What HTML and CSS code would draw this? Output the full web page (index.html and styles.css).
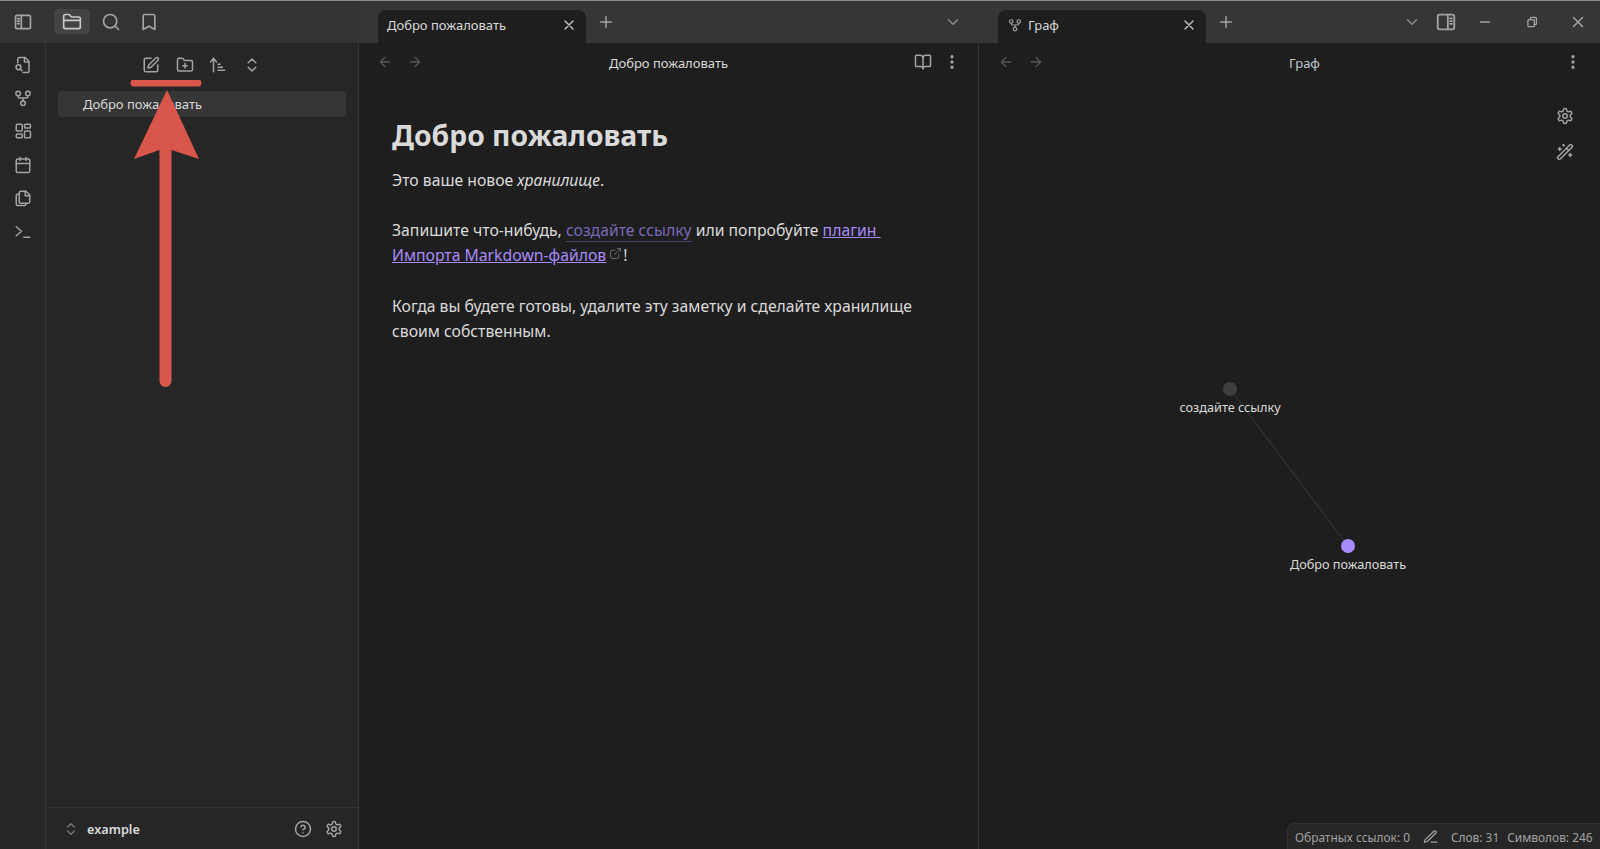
FILE: index.html
```html
<!DOCTYPE html>
<html lang="ru">
<head>
<meta charset="utf-8">
<title>Добро пожаловать</title>
<link rel="stylesheet" href="styles.css">
</head>
<body>
<svg class="defs" width="0" height="0" aria-hidden="true">
  <symbol id="i-sidebar" viewBox="0 0 24 24"><rect x="3" y="4" width="18" height="16" rx="2"/><path d="M10 4v16M5.5 8H7.5M5.5 11H7.5M5.5 14H7.5"/></symbol>
  <symbol id="i-sidebar-r" viewBox="0 0 24 24"><rect x="3" y="4" width="18" height="16" rx="2"/><path d="M14 4v16M16.5 8H18.5M16.5 11H18.5M16.5 14H18.5"/></symbol>
  <symbol id="i-folder" viewBox="0 0 24 24"><path d="M20 20a2 2 0 0 0 2-2V8a2 2 0 0 0-2-2h-7.9a2 2 0 0 1-1.69-.9L9.6 3.9A2 2 0 0 0 7.93 3H4a2 2 0 0 0-2 2v13a2 2 0 0 0 2 2Z"/><path d="M2 10h20"/></symbol>
  <symbol id="i-search" viewBox="0 0 24 24"><circle cx="11" cy="11" r="8"/><path d="m21 21-4.3-4.3"/></symbol>
  <symbol id="i-bookmark" viewBox="0 0 24 24"><path d="m19 21-7-4-7 4V5a2 2 0 0 1 2-2h10a2 2 0 0 1 2 2v16z"/></symbol>
  <symbol id="i-filesearch" viewBox="0 0 24 24"><path d="M5 9V4a2 2 0 0 1 2-2h8l5 5v13a2 2 0 0 1-2 2h-6"/><path d="M14 2v6h6"/><circle cx="6" cy="15" r="3.2"/><path d="m10.5 19.5-2.2-2.2"/></symbol>
  <symbol id="i-fork" viewBox="0 0 24 24"><circle cx="12" cy="19" r="3"/><circle cx="5.5" cy="6" r="3"/><circle cx="18.5" cy="6" r="3"/><path d="M5.5 9v1c0 1.200.8 2 2 2h9c1.200 0 2-.8 2-2V9M12 12v4"/></symbol>
  <symbol id="i-dash" viewBox="0 0 24 24"><rect x="3" y="3" width="8" height="9" rx="1.500"/><rect x="14" y="3" width="8" height="5" rx="1.500"/><rect x="14" y="12" width="8" height="9" rx="1.500"/><rect x="3" y="16" width="8" height="5" rx="1.500"/></symbol>
  <symbol id="i-calendar" viewBox="0 0 24 24"><rect x="3" y="4" width="18" height="18" rx="2"/><path d="M8 2v4M16 2v4M3 10h18"/></symbol>
  <symbol id="i-copy" viewBox="0 0 24 24"><path d="M9 3h7l5 5v9a2 2 0 0 1-2 2H9a2 2 0 0 1-2-2V5a2 2 0 0 1 2-2z"/><path d="M15 3v6h6"/><path d="M7 7H5a2 2 0 0 0-2 2v11a2 2 0 0 0 2 2h9a2 2 0 0 0 2-2v-1"/></symbol>
  <symbol id="i-term" viewBox="0 0 24 24"><path d="m3 17 7-6-7-6M13 19h8"/></symbol>
  <symbol id="i-edit" viewBox="0 0 24 24"><path d="M12 3H5a2 2 0 0 0-2 2v14a2 2 0 0 0 2 2h14a2 2 0 0 0 2-2v-7"/><path d="M18.375 2.625a2.121 2.121 0 1 1 3 3L12 15l-4 1 1-4Z"/></symbol>
  <symbol id="i-folderplus" viewBox="0 0 24 24"><path d="M20 20a2 2 0 0 0 2-2V8a2 2 0 0 0-2-2h-7.900a2 2 0 0 1-1.690-.9L9.600 3.900A2 2 0 0 0 7.930 3H4a2 2 0 0 0-2 2v13a2 2 0 0 0 2 2Z"/><path d="M12 10v6M9 13h6"/></symbol>
  <symbol id="i-sort" viewBox="0 0 24 24"><path d="m2 8 4-5 4 5M6 3v18M12 11h3M12 15h6M12 19h9"/></symbol>
  <symbol id="i-updown" viewBox="0 0 24 24"><path d="m7 15 5 5 5-5M7 9l5-5 5 5"/></symbol>
  <symbol id="i-help" viewBox="0 0 24 24"><circle cx="12" cy="12" r="10"/><path d="M9.090 9a3 3 0 0 1 5.830 1c0 2-3 3-3 3M12 17h.01"/></symbol>
  <symbol id="i-gear" viewBox="0 0 24 24"><path d="M12.220 2h-.44a2 2 0 0 0-2 2v.18a2 2 0 0 1-1 1.730l-.43.25a2 2 0 0 1-2 0l-.15-.08a2 2 0 0 0-2.730.73l-.22.38a2 2 0 0 0 .73 2.730l.15.1a2 2 0 0 1 1 1.720v.51a2 2 0 0 1-1 1.740l-.15.09a2 2 0 0 0-.73 2.730l.22.38a2 2 0 0 0 2.730.73l.15-.08a2 2 0 0 1 2 0l.43.25a2 2 0 0 1 1 1.730V20a2 2 0 0 0 2 2h.44a2 2 0 0 0 2-2v-.18a2 2 0 0 1 1-1.730l.43-.25a2 2 0 0 1 2 0l.15.08a2 2 0 0 0 2.730-.73l.22-.39a2 2 0 0 0-.73-2.730l-.15-.08a2 2 0 0 1-1-1.740v-.5a2 2 0 0 1 1-1.740l.15-.09a2 2 0 0 0 .73-2.730l-.22-.38a2 2 0 0 0-2.730-.73l-.15.08a2 2 0 0 1-2 0l-.43-.25a2 2 0 0 1-1-1.730V4a2 2 0 0 0-2-2z"/><circle cx="12" cy="12" r="3"/></symbol>
  <symbol id="i-wand" viewBox="0 0 24 24"><path d="m21.640 3.640-1.280-1.280a1.210 1.210 0 0 0-1.720 0L2.360 18.640a1.210 1.210 0 0 0 0 1.720l1.280 1.280a1.200 1.200 0 0 0 1.710 0L21.640 5.360a1.200 1.200 0 0 0 0-1.720Z"/><path d="m14 7 3 3M5 6v4M19 14v4M10 2v2M7 8H3M21 16h-4M11 3H9"/></symbol>
  <symbol id="i-book" viewBox="0 0 24 24"><path d="M12 7v14"/><path d="M3 18a1 1 0 0 1-1-1V4a1 1 0 0 1 1-1h5a4 4 0 0 1 4 4 4 4 0 0 1 4-4h5a1 1 0 0 1 1 1v13a1 1 0 0 1-1 1h-6a3 3 0 0 0-3 3 3 3 0 0 0-3-3z"/></symbol>
  <symbol id="i-dots" viewBox="0 0 24 24"><circle cx="12" cy="5" r="1.200"/><circle cx="12" cy="12" r="1.200"/><circle cx="12" cy="19" r="1.200"/></symbol>
  <symbol id="i-back" viewBox="0 0 24 24"><path d="m12 19-7-7 7-7M19 12H5"/></symbol>
  <symbol id="i-fwd" viewBox="0 0 24 24"><path d="M5 12h14M12 5l7 7-7 7"/></symbol>
  <symbol id="i-x" viewBox="0 0 24 24"><path d="M18 6 6 18M6 6l12 12"/></symbol>
  <symbol id="i-plus" viewBox="0 0 24 24"><path d="M5 12h14M12 5v14"/></symbol>
  <symbol id="i-down" viewBox="0 0 24 24"><path d="m6 9 6 6 6-6"/></symbol>
  <symbol id="i-min" viewBox="0 0 24 24"><path d="M5 12h14"/></symbol>
  <symbol id="i-restore" viewBox="0 0 24 24"><rect x="5" y="8" width="11" height="12" rx="1.500"/><path d="M9 8V5.500A1.500 1.500 0 0 1 10.500 4H18a1.500 1.500 0 0 1 1.500 1.500V15A1.500 1.500 0 0 1 18 16.500h-2"/></symbol>
  <symbol id="i-pencil" viewBox="0 0 24 24"><path d="M13 21h9"/><path d="M17.500 3.500a2.120 2.120 0 0 1 3 3L7 20l-5 1.500L3.500 17Z"/></symbol>
  <symbol id="i-ext" viewBox="0 0 24 24"><path d="M18 13v6a2 2 0 0 1-2 2H5a2 2 0 0 1-2-2V8a2 2 0 0 1 2-2h6M15 3h6v6M10 14 21 3"/></symbol>
</svg>

<div class="app">
  <header class="titlebar">
    <div class="tb-left">
      <span class="ic tb-toggle"><svg class="i20"><use href="#i-sidebar"/></svg></span>
      <span class="tb-tab active"><svg class="i20"><use href="#i-folder"/></svg></span>
      <span class="tb-tab"><svg class="i20"><use href="#i-search"/></svg></span>
      <span class="tb-tab"><svg class="i20"><use href="#i-bookmark"/></svg></span>
    </div>
    <div class="tb-pane tb-pane-one">
      <div class="tab tab-one">
        <span class="tab-title">Добро пожаловать</span>
        <svg class="i16 tab-x"><use href="#i-x"/></svg>
      </div>
      <svg class="i18 tab-plus"><use href="#i-plus"/></svg>
      <svg class="i18 tab-more"><use href="#i-down"/></svg>
    </div>
    <div class="tb-pane tb-pane-two">
      <div class="tab tab-two">
        <svg class="i14 tab-icon"><use href="#i-fork"/></svg>
        <span class="tab-title">Граф</span>
        <svg class="i16 tab-x"><use href="#i-x"/></svg>
      </div>
      <svg class="i18 tab-plus"><use href="#i-plus"/></svg>
      <svg class="i18 tab-more tab-more-two"><use href="#i-down"/></svg>
      <svg class="i22 win-layout"><use href="#i-sidebar-r"/></svg>
      <svg class="i16 win-min"><use href="#i-min"/></svg>
      <svg class="i14 win-restore"><use href="#i-restore"/></svg>
      <svg class="i18 win-close"><use href="#i-x"/></svg>
    </div>
  </header>

  <div class="workspace">
    <nav class="ribbon">
      <span class="rib"><svg class="i18"><use href="#i-filesearch"/></svg></span>
      <span class="rib"><svg class="i18"><use href="#i-fork"/></svg></span>
      <span class="rib"><svg class="i18"><use href="#i-dash"/></svg></span>
      <span class="rib"><svg class="i18"><use href="#i-calendar"/></svg></span>
      <span class="rib"><svg class="i18"><use href="#i-copy"/></svg></span>
      <span class="rib"><svg class="i18"><use href="#i-term"/></svg></span>
    </nav>

    <aside class="sidebar">
      <div class="side-nav">
        <svg class="i18"><use href="#i-edit"/></svg>
        <svg class="i18"><use href="#i-folderplus"/></svg>
        <svg class="i18"><use href="#i-sort"/></svg>
        <svg class="i18"><use href="#i-updown"/></svg>
      </div>
      <div class="file-row">Добро пожаловать</div>
      <div class="vault">
        <svg class="i16 vault-switch"><use href="#i-updown"/></svg>
        <span class="vault-name">example</span>
        <svg class="i18 vault-help"><use href="#i-help"/></svg>
        <svg class="i18 vault-gear"><use href="#i-gear"/></svg>
      </div>
    </aside>

    <main class="pane pane-note">
      <div class="view-head">
        <svg class="i16 nav-back"><use href="#i-back"/></svg>
        <svg class="i16 nav-fwd"><use href="#i-fwd"/></svg>
        <span class="view-title">Добро пожаловать</span>
        <svg class="i18 view-book"><use href="#i-book"/></svg>
        <svg class="i18 view-dots"><use href="#i-dots"/></svg>
      </div>
      <article class="note">
        <h1>Добро пожаловать</h1>
        <p>Это ваше новое <em>хранилище</em>.</p>
        <p>Запишите что-нибудь, <span class="link-new">создайте ссылку</span> или попробуйте <span class="link-ext">плагин&nbsp;<wbr>Импорта Markdown-файлов</span><svg class="ext"><use href="#i-ext"/></svg>!</p>
        <p>Когда вы будете готовы, удалите эту заметку и сделайте хранилище своим собственным.</p>
      </article>
    </main>

    <section class="pane pane-graph">
      <div class="view-head">
        <svg class="i16 nav-back"><use href="#i-back"/></svg>
        <svg class="i16 nav-fwd"><use href="#i-fwd"/></svg>
        <span class="view-title view-title-graph">Граф</span>
        <svg class="i18 view-dots"><use href="#i-dots"/></svg>
      </div>
      <div class="graph-tools">
        <svg class="i18"><use href="#i-gear"/></svg>
        <svg class="i18"><use href="#i-wand"/></svg>
      </div>
      <svg class="graph-edge" width="620" height="806"><line x1="251" y1="346" x2="369" y2="503"/></svg>
      <div class="node node-a"><span class="dot"></span><span class="node-label">создайте ссылку</span></div>
      <div class="node node-b"><span class="dot"></span><span class="node-label">Добро пожаловать</span></div>
      <footer class="status">
        <span>Обратных ссылок: 0</span>
        <svg class="i15"><use href="#i-pencil"/></svg>
        <span>Слов: 31</span>
        <span>Символов: 246</span>
      </footer>
    </section>
  </div>

  <svg class="callout" width="120" height="320" viewBox="0 0 120 320">
    <path d="M27 3H91" class="callout-bar"/>
    <path d="M60 10 92 79 64.500 70V301a6 6 0 0 1-12 0V70L27 79Z" class="callout-arrow"/>
  </svg>
</div>
</body>
</html>
```
FILE: styles.css
```css
* { box-sizing: border-box; }
html, body { margin: 0; height: 100%; }
body {
  background: #1e1e1e;
  color: #dadada;
  font-family: "Noto Sans", "Open Sans", sans-serif;
  overflow: hidden;
}
.defs { position: absolute; }
svg { display: block; flex: none; fill: none; stroke: #a3a3a3; stroke-width: 2; stroke-linecap: round; stroke-linejoin: round; }
.i14 { width: 14px; height: 14px; }
.i15 { width: 15px; height: 15px; }
.i16 { width: 16px; height: 16px; }
.i18 { width: 18px; height: 18px; }
.i20 { width: 20px; height: 20px; }
.i22 { width: 22px; height: 22px; }

.app { position: relative; width: 1600px; height: 849px; display: flex; flex-direction: column; }

.titlebar { height: 43px; flex: none; display: flex; background: #363636; border-top: 1px solid #8a8a8a; }
.tb-left { width: 359px; flex: none; display: flex; align-items: center; padding: 0 0 1px 13px; background: #333; }
.ic { display: flex; }
.tb-toggle { margin-right: 21px; }
.tb-tab { width: 36px; height: 25px; margin-right: 2.500px; display: flex; align-items: center; justify-content: center; border-radius: 4px; }
.tb-tab.active { background: #434343; }
.tb-tab.active svg { stroke: #c8c8c8; }
.tb-pane { display: flex; align-items: center; position: relative; }
.tb-pane-one { width: 620px; flex: none; padding-left: 19px; }
.tb-pane-two { flex: 1; padding-left: 19px; }
.tab { align-self: flex-end; height: 33px; padding-bottom: 4px; background: #1e1e1e; border-radius: 8px 8px 0 0; display: flex; align-items: center; font-size: 13px; color: #dadada; padding-left: 9px; padding-right: 9px; }
.tab-one { width: 208px; }
.tab-two { width: 208px; padding-left: 10px; }
.tab-title { flex: 1; line-height: 28px; }
.tab-icon { margin-right: 6px; }
.tab-plus { margin-left: 11px; }
.tab-more { margin-left: auto; margin-right: 17px; stroke: #8a8a8a; }
.tab-more-two { margin-left: 168px; margin-right: 14px; }
.win-layout { margin-right: 20px; }
.win-min { margin-right: 32px; }
.win-restore { margin-right: 30px; stroke-width: 2.2; }
.tab-x { stroke: #c8c8c8; }

.workspace { flex: 1; min-height: 0; display: flex; }
.ribbon { width: 46px; flex: none; background: #262626; border-right: 1px solid #363636; display: flex; flex-direction: column; padding-top: 5px; padding-left: 13.500px; }
.rib { height: 33.400px; display: flex; align-items: center; }

.sidebar { width: 313px; flex: none; background: #262626; border-right: 1px solid #363636; display: flex; flex-direction: column; }
.side-nav { height: 44px; display: flex; align-items: center; padding: 0 0 0 96px; gap: 15.500px; }
.file-row { margin: 4px 12px 0; height: 26px; background: #363636; border-radius: 4px; padding-left: 25px; font-size: 13px; line-height: 26px; color: #dadada; }
.vault { margin-top: auto; height: 42px; border-top: 1px solid #333; display: flex; align-items: center; padding: 0 15px 0 17px; }
.vault-switch { stroke: #777; margin-right: 8px; }
.vault-name { font-size: 12.700px; font-weight: 600; color: #dadada; flex: 1; }
.vault-help { margin-right: 13px; }

.pane { background: #1e1e1e; position: relative; }
.pane-note { width: 620px; flex: none; border-right: 1px solid #363636; }
.pane-graph { flex: 1; overflow: hidden; }
.view-head { height: 38px; display: flex; align-items: center; position: relative; padding: 0 17px 0 18px; }
.pane-graph .view-head { padding-left: 19px; }
.nav-back, .nav-fwd { stroke: #555; }
.nav-fwd { margin-left: 14px; }
.view-title { position: absolute; left: 0; right: 0; top: 11px; text-align: center; font-size: 13px; line-height: 18px; color: #dadada; }
.view-title-graph { color: #c0c8d0; left: 30px; }
.view-book { margin-left: auto; margin-right: 12px; position: relative; left: 1px; }
.view-dots { position: relative; }
.pane-note .view-dots { margin-right: 0; }
.pane-graph .view-dots { margin-left: auto; margin-right: 1px; }

.note { padding: 35px 45px 0 33px; font-size: 15.750px; line-height: 25.200px; }
.note h1 { margin: 0 0 14px; font-size: 28.300px; line-height: 38px; font-weight: 700; color: #dadada; }
.note p { margin: 0 0 25px; }
.link-new { color: #7a68b8; border-bottom: 1px solid #4a3f70; }
.link-ext { color: #a88bfa; text-decoration: underline; }
.ext { display: inline-block; width: 13px; height: 13px; stroke: #7d7d7d; stroke-width: 1.500; margin: 0 1px 0 3px; vertical-align: 1px; }

.graph-tools { position: absolute; top: 63.500px; right: 26px; display: flex; flex-direction: column; gap: 18px; }
.graph-edge { position: absolute; left: 0; top: 0; stroke: #3a3a3a; stroke-width: 1; }
.node { position: absolute; display: flex; flex-direction: column; align-items: center; width: 200px; }
.node-a { left: 151px; top: 339px; }
.node-b { left: 269px; top: 496px; }
.dot { width: 14px; height: 14px; border-radius: 50%; background: #3f3f3f; }
.node-b .dot { background: #a88bfa; }
.node-label { font-size: 12.700px; line-height: 18px; margin-top: 2px; color: #dadada; }
.status { position: absolute; right: 0; bottom: 0; height: 26px; width: 313px; background: #262626; border-radius: 8px 0 0 0; border: 1px solid #303030; border-width: 1px 0 0 1px; display: flex; align-items: center; padding-left: 7px; font-size: 11.900px; color: #a3a3a3; white-space: nowrap; }
.status svg { margin: 0 13px 0 13px; }
.status span + svg + span { margin-right: 8px; }

.callout { position: absolute; left: 107px; top: 80px; pointer-events: none; }
.callout-bar { stroke: #d9574a; stroke-width: 7; }
.callout-arrow { fill: #d9574a; stroke: none; }
```
